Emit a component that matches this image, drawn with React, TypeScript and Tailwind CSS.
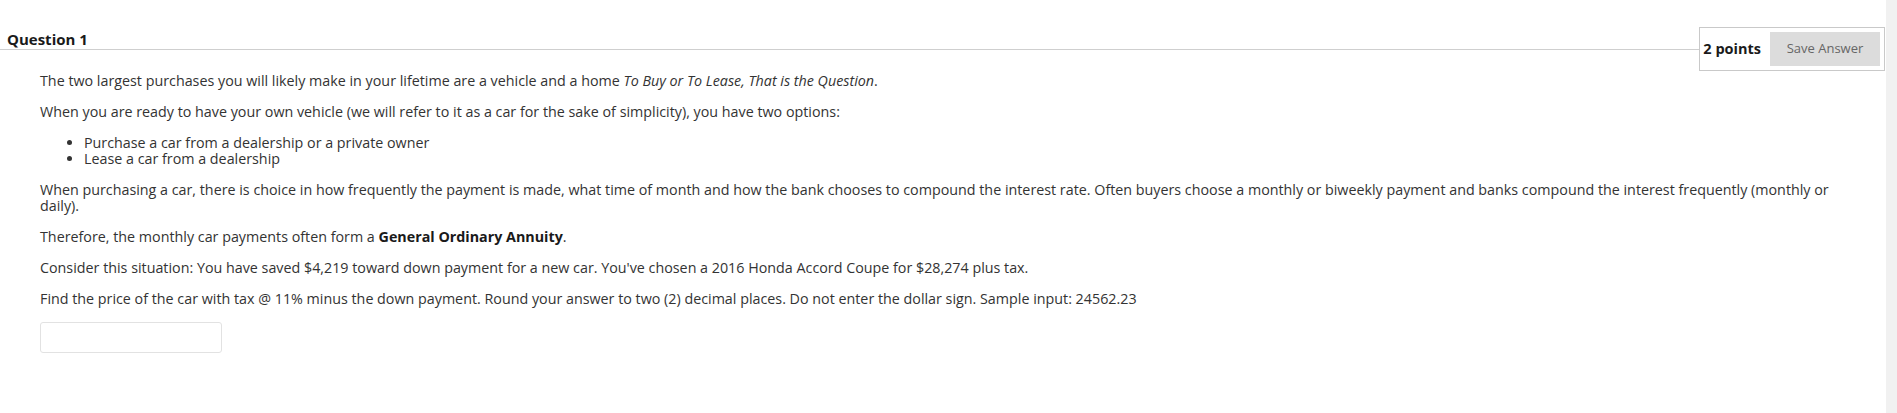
import React from 'react';

export default function App() {
  return (
    <div className="flex w-full min-h-[413px] bg-white text-[#333] font-['Open_Sans',sans-serif]">
      <div className="flex-1 flex flex-col">
        {/* header */}
        <div className="flex items-start pt-[27px] pr-[1px]">
          <div className="flex-1 h-[23px] border-b border-[#cfcfcf] pl-[7px]">
            <h2 className="text-[15px] leading-[24px] font-bold text-[#1a1a1a]">Question 1</h2>
          </div>
          <div className="flex items-center h-[44px] border border-[#c9c9c9] pl-[3px] pr-[4px] bg-white">
            <span className="text-[14.5px] font-bold text-[#1a1a1a] mr-[9px]">2 points</span>
            <button className="h-[34px] w-[110px] bg-[#dcdcdc] text-[13px] text-[#666]">Save Answer</button>
          </div>
        </div>

        {/* question body */}
        <div className="pl-[40px] pr-[26px] pt-[2px] text-[14.3px] leading-[16px]">
          <p className="mb-[15px]">
            The two largest purchases you will likely make in your lifetime are a vehicle and a home <em>To Buy or To Lease, That is the Question</em>.
          </p>
          <p className="mb-[15px]">
            When you are ready to have your own vehicle (we will refer to it as a car for the sake of simplicity), you have two options:
          </p>
          <ul className="mb-[15px] pl-[44px] list-disc">
            <li>Purchase a car from a dealership or a private owner</li>
            <li>Lease a car from a dealership</li>
          </ul>
          <p className="mb-[15px]">
            When purchasing a car, there is choice in how frequently the payment is made, what time of month and how the bank chooses to compound the interest rate. Often buyers choose a monthly or biweekly payment and banks compound the interest frequently (monthly or daily).
          </p>
          <p className="mb-[15px]">
            Therefore, the monthly car payments often form a <strong className="text-[#1a1a1a]">General Ordinary Annuity</strong>.
          </p>
          <p className="mb-[15px]">
            Consider this situation: You have saved $4,219 toward down payment for a new car. You've chosen a 2016 Honda Accord Coupe for $28,274 plus tax.
          </p>
          <p className="mb-[15px]">
            Find the price of the car with tax @ 11% minus the down payment. Round your answer to two (2) decimal places. Do not enter the dollar sign. Sample input: 24562.23
          </p>
          <input type="text" className="w-[182px] h-[31px] border border-[#e2e2e2] rounded-[3px] outline-none" />
        </div>
      </div>
      <div className="w-[11px] bg-[#f1f1f1]" />
    </div>
  );
}
